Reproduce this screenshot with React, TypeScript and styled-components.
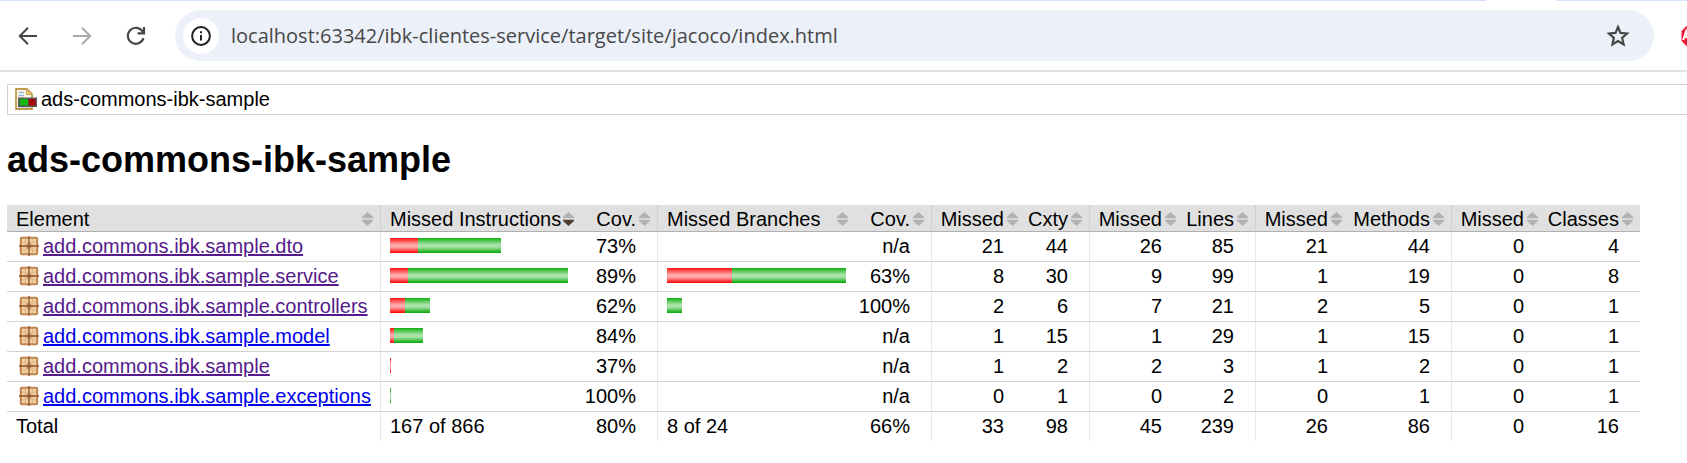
import React from "react";
import styled, { createGlobalStyle } from "styled-components";

const GlobalStyle = createGlobalStyle`
  *, *::before, *::after { box-sizing: border-box; }
  body {
    margin: 0;
    background: #fff;
    color: #000;
    font-family: "Liberation Sans", Arial, sans-serif;
    font-size: 20px;
    overflow-x: hidden;
  }
`;

const TabStrip = styled.div`
  display: flex;
  justify-content: flex-end;
  height: 1px;
  padding-right: 131px;
  background: #d3e3fd;
`;

const ActiveTab = styled.div`
  width: 70px;
  background: #fff;
`;

const Toolbar = styled.nav`
  display: flex;
  align-items: center;
  height: 71px;
  padding: 0 0 0 10px;
  border-bottom: 2px solid #e1e1e1;
`;

const NavButtons = styled.div`
  display: flex;
  gap: 18px;
  margin-right: 21px;
`;

const IconButton = styled.button<{ $muted?: boolean }>`
  display: flex;
  align-items: center;
  justify-content: center;
  width: 36px;
  height: 36px;
  padding: 0;
  border: 0;
  border-radius: 50%;
  background: none;
  color: ${(p) => (p.$muted ? "#a9a9a9" : "#474747")};
`;

const AddressBar = styled.div`
  display: flex;
  flex: 1;
  align-items: center;
  height: 51px;
  padding: 0 18px 0 8px;
  border-radius: 26px;
  background: #ecf0f9;
`;

const SiteInfoButton = styled(IconButton)`
  background: #fff;
  color: #1f1f1f;
`;

const AddressInput = styled.input`
  flex: 1;
  min-width: 0;
  padding: 0;
  margin-left: 12px;
  border: 0;
  outline: 0;
  background: none;
  color: #474747;
  font-family: "Open Sans", "Noto Sans", sans-serif;
  font-size: 20px;
  line-height: 28px;
`;

const Extensions = styled.div`
  display: flex;
  width: 33px;
  padding-left: 27px;
  overflow: hidden;
`;

const ExtensionButton = styled.button`
  display: flex;
  flex: none;
  padding: 0;
  border: 0;
  background: none;
`;

const Report = styled.main`
  padding: 12px 0 0 7px;
`;

const Breadcrumb = styled.div`
  display: flex;
  align-items: center;
  gap: 4px;
  height: 31px;
  padding: 0 0 2px 7px;
  border: 1px solid #d6d3ce;
  border-right: 0;
  line-height: 24px;
`;

const Title = styled.h1`
  margin: 24px 0;
  font-size: 36px;
  font-weight: bold;
  line-height: 42px;
`;

const CoverageTable = styled.table`
  border-collapse: separate;
  border-spacing: 0;
`;

const HeadCell = styled.th<{ $divided?: boolean; $end?: boolean }>`
  height: 27px;
  padding: 2px 7px 0 ${(p) => (p.$end ? 2 : 9)}px;
  border-bottom: 1px solid #b0b0b0;
  border-left: ${(p) => (p.$divided ? "1px solid #cfcfcf" : "0")};
  background: #e0e0e0;
  font-weight: normal;
`;

const SortButton = styled.button<{ $end?: boolean }>`
  display: flex;
  align-items: center;
  justify-content: ${(p) => (p.$end ? "flex-end" : "space-between")};
  gap: ${(p) => (p.$end ? 3 : 1)}px;
  width: 100%;
  padding: 0;
  border: 0;
  background: none;
  color: inherit;
  font: inherit;
  line-height: 24px;
  white-space: nowrap;
`;

const Cell = styled.td<{ $divided?: boolean; $end?: boolean; $last?: boolean }>`
  height: ${(p) => (p.$last ? 29 : 30)}px;
  padding: 0 ${(p) => (p.$end ? 21 : 9)}px 2px ${(p) => (p.$end ? 2 : 9)}px;
  border-bottom: ${(p) => (p.$last ? "0" : "1px solid #d6d3ce")};
  border-left: ${(p) => (p.$divided ? "1px solid #e8e8e8" : "0")};
  text-align: ${(p) => (p.$end ? "right" : "left")};
  line-height: 24px;
  white-space: nowrap;
`;

const PackageLabel = styled.div`
  display: flex;
  align-items: center;
  gap: 4px;
  padding-left: 3px;
`;

const PackageLink = styled.a<{ $visited: boolean }>`
  color: ${(p) => (p.$visited ? "#551a8b" : "#0000ee")};
  text-decoration: underline;
`;

const Bar = styled.div`
  display: flex;
  height: 15px;
`;

const BarPart = styled.span<{ $missed?: boolean }>`
  background: ${(p) =>
    p.$missed
      ? "linear-gradient(#ff1010, #ffaaaa 45%, #ffaaaa 60%, #ff0000)"
      : "linear-gradient(#10b010, #aae2aa 45%, #aae2aa 60%, #00a800)"};
`;

const BackIcon = () => (
  <svg width="20" height="20" viewBox="0 0 20 20" fill="none" stroke="currentColor" strokeWidth="2">
    <path d="M19 10H2.5M10 1.8L1.8 10L10 18.2" />
  </svg>
);

const ForwardIcon = () => (
  <svg width="20" height="20" viewBox="0 0 20 20" fill="none" stroke="currentColor" strokeWidth="2">
    <path d="M1 10H17.5M10 1.8L18.2 10L10 18.2" />
  </svg>
);

const ReloadIcon = () => (
  <svg width="20" height="20" viewBox="0 0 20 20" fill="none" stroke="currentColor" strokeWidth="2.2">
    <path d="M17.5 12.2A8 8 0 1 1 16.6 5.4L17.6 7" />
    <path d="M18 1V7.4H11.6" />
  </svg>
);

const InfoIcon = () => (
  <svg width="20" height="20" viewBox="0 0 20 20" fill="none" stroke="currentColor" strokeWidth="2">
    <circle cx="10" cy="10" r="8.9" />
    <path d="M10 9V14.6M10 5.2V7.3" />
  </svg>
);

const StarIcon = () => (
  <svg width="24" height="24" viewBox="0 0 24 24" fill="none" stroke="currentColor" strokeWidth="2.2">
    <path d="M12 3L14.5 8.9L21 9.5L16.1 13.8L17.6 20.4L12 17L6.4 20.4L7.9 13.8L3 9.5L9.5 8.9Z" />
  </svg>
);

const AdBlockIcon = () => (
  <svg width="24" height="24" viewBox="0 0 24 24">
    <path d="M7 0.5H17L23.5 7V17L17 23.5H7L0.5 17V7Z" fill="#f0193c" />
    <path d="M2.2 16L5 7.5L7.2 16M3.2 13H7" fill="none" stroke="#fff" strokeWidth="2" />
  </svg>
);

const ReportIcon = () => (
  <svg width="22" height="22" viewBox="0 0 22 22" aria-hidden="true">
    <path d="M1 1H12L17 6V21H1Z" fill="#fdf8e4" stroke="#c09a50" strokeWidth="1.8" />
    <path d="M11.5 1V6.5H17Z" fill="#ecd08a" stroke="#c9a04e" />
    <path d="M3.5 4.5H9M3.5 7.5H9" stroke="#9db6dc" strokeWidth="1.6" />
    <path d="M4 19.3H15" stroke="#b9cbe6" strokeWidth="1" />
    <rect x="3" y="9.5" width="19" height="9.5" fill="#585858" />
    <rect x="4.8" y="11" width="8.2" height="6.5" fill="#12b812" />
    <rect x="13.6" y="11" width="7" height="6.5" fill="#a80808" />
  </svg>
);

const PackageIcon = () => (
  <svg width="20" height="20" viewBox="0 0 20 20" aria-hidden="true">
    <rect x="1.8" y="1.8" width="16.4" height="16.4" rx="1" fill="#efd3a4" stroke="#bd8450" strokeWidth="2" />
    <path d="M6.2 3V17M13.8 3V17M3 6.2H17M3 13.8H17" stroke="#dfb582" strokeWidth="1" />
    <path d="M10 0V20M0 10H20" stroke="#90522e" strokeWidth="1.3" />
    <rect x="7.5" y="7.5" width="5" height="5" fill="#90522e" opacity="0.5" />
  </svg>
);

const SortIcon = ({ active }: { active?: boolean }) => (
  <svg width="11" height="14" viewBox="0 0 11 14" aria-hidden="true">
    <path d="M5.5 0L11 5V6.2H0V5Z" fill="#b2b2b2" />
    <path d="M5.5 14L11 9V7.8H0V9Z" fill={active ? "#503c30" : "#b2b2b2"} />
  </svg>
);

type Column = { label: string; width: number; divided?: boolean; end?: boolean; sorted?: boolean };

const columns: Column[] = [
  { label: "Element", width: 373 },
  { label: "Missed Instructions", width: 201, divided: true, sorted: true },
  { label: "Cov.", width: 76, end: true },
  { label: "Missed Branches", width: 197, divided: true },
  { label: "Cov.", width: 76, end: true },
  { label: "Missed", width: 94, divided: true, end: true },
  { label: "Cxty", width: 64, end: true },
  { label: "Missed", width: 94, divided: true, end: true },
  { label: "Lines", width: 72, end: true },
  { label: "Missed", width: 94, divided: true, end: true },
  { label: "Methods", width: 102, end: true },
  { label: "Missed", width: 94, divided: true, end: true },
  { label: "Classes", width: 95, end: true },
];

type Split = [missed: number, covered: number];
type PackageRow = {
  name: string;
  visited: boolean;
  instructions: Split;
  instructionCov: string;
  branches: Split;
  branchCov: string;
  counters: number[];
};

const rows: PackageRow[] = [
  { name: "add.commons.ibk.sample.dto", visited: true, instructions: [28, 83], instructionCov: "73%", branches: [0, 0], branchCov: "n/a", counters: [21, 44, 26, 85, 21, 44, 0, 4] },
  { name: "add.commons.ibk.sample.service", visited: true, instructions: [18, 160], instructionCov: "89%", branches: [65, 114], branchCov: "63%", counters: [8, 30, 9, 99, 1, 19, 0, 8] },
  { name: "add.commons.ibk.sample.controllers", visited: true, instructions: [15, 25], instructionCov: "62%", branches: [0, 15], branchCov: "100%", counters: [2, 6, 7, 21, 2, 5, 0, 1] },
  { name: "add.commons.ibk.sample.model", visited: false, instructions: [4, 29], instructionCov: "84%", branches: [0, 0], branchCov: "n/a", counters: [1, 15, 1, 29, 1, 15, 0, 1] },
  { name: "add.commons.ibk.sample", visited: true, instructions: [1, 0], instructionCov: "37%", branches: [0, 0], branchCov: "n/a", counters: [1, 2, 2, 3, 1, 2, 0, 1] },
  { name: "add.commons.ibk.sample.exceptions", visited: false, instructions: [0, 1], instructionCov: "100%", branches: [0, 0], branchCov: "n/a", counters: [0, 1, 0, 2, 0, 1, 0, 1] },
];

const totals = [33, 98, 45, 239, 26, 86, 0, 16];

const CoverageBar = ({ split: [missed, covered] }: { split: Split }) => (
  <Bar>
    <BarPart $missed style={{ width: missed }} />
    <BarPart style={{ width: covered }} />
  </Bar>
);

export default function App() {
  return (
    <>
      <GlobalStyle />
      <TabStrip>
        <ActiveTab />
      </TabStrip>
      <Toolbar aria-label="Browser">
        <NavButtons>
          <IconButton aria-label="Back"><BackIcon /></IconButton>
          <IconButton aria-label="Forward" $muted><ForwardIcon /></IconButton>
          <IconButton aria-label="Reload"><ReloadIcon /></IconButton>
        </NavButtons>
        <AddressBar>
          <SiteInfoButton aria-label="Site information"><InfoIcon /></SiteInfoButton>
          <AddressInput
            aria-label="Address"
            defaultValue="localhost:63342/ibk-clientes-service/target/site/jacoco/index.html"
          />
          <IconButton aria-label="Bookmark"><StarIcon /></IconButton>
        </AddressBar>
        <Extensions>
          <ExtensionButton aria-label="Ad blocker"><AdBlockIcon /></ExtensionButton>
        </Extensions>
      </Toolbar>
      <Report>
        <Breadcrumb>
          <ReportIcon />
          <span>ads-commons-ibk-sample</span>
        </Breadcrumb>
        <Title>ads-commons-ibk-sample</Title>
        <CoverageTable>
          <colgroup>
            {columns.map((c, i) => (
              <col key={i} style={{ width: c.width }} />
            ))}
          </colgroup>
          <thead>
            <tr>
              {columns.map((c, i) => (
                <HeadCell key={i} scope="col" $divided={c.divided} $end={c.end}>
                  <SortButton $end={c.end}>
                    {c.label}
                    <SortIcon active={c.sorted} />
                  </SortButton>
                </HeadCell>
              ))}
            </tr>
          </thead>
          <tbody>
            {rows.map((r) => (
              <tr key={r.name}>
                <Cell>
                  <PackageLabel>
                    <PackageIcon />
                    <PackageLink href="#" $visited={r.visited}>{r.name}</PackageLink>
                  </PackageLabel>
                </Cell>
                <Cell $divided><CoverageBar split={r.instructions} /></Cell>
                <Cell $end>{r.instructionCov}</Cell>
                <Cell $divided><CoverageBar split={r.branches} /></Cell>
                <Cell $end>{r.branchCov}</Cell>
                {r.counters.map((n, i) => (
                  <Cell key={i} $end $divided={i % 2 === 0}>{n}</Cell>
                ))}
              </tr>
            ))}
          </tbody>
          <tfoot>
            <tr>
              <Cell $last>Total</Cell>
              <Cell $last $divided>167 of 866</Cell>
              <Cell $last $end>80%</Cell>
              <Cell $last $divided>8 of 24</Cell>
              <Cell $last $end>66%</Cell>
              {totals.map((n, i) => (
                <Cell key={i} $last $end $divided={i % 2 === 0}>{n}</Cell>
              ))}
            </tr>
          </tfoot>
        </CoverageTable>
      </Report>
    </>
  );
}
